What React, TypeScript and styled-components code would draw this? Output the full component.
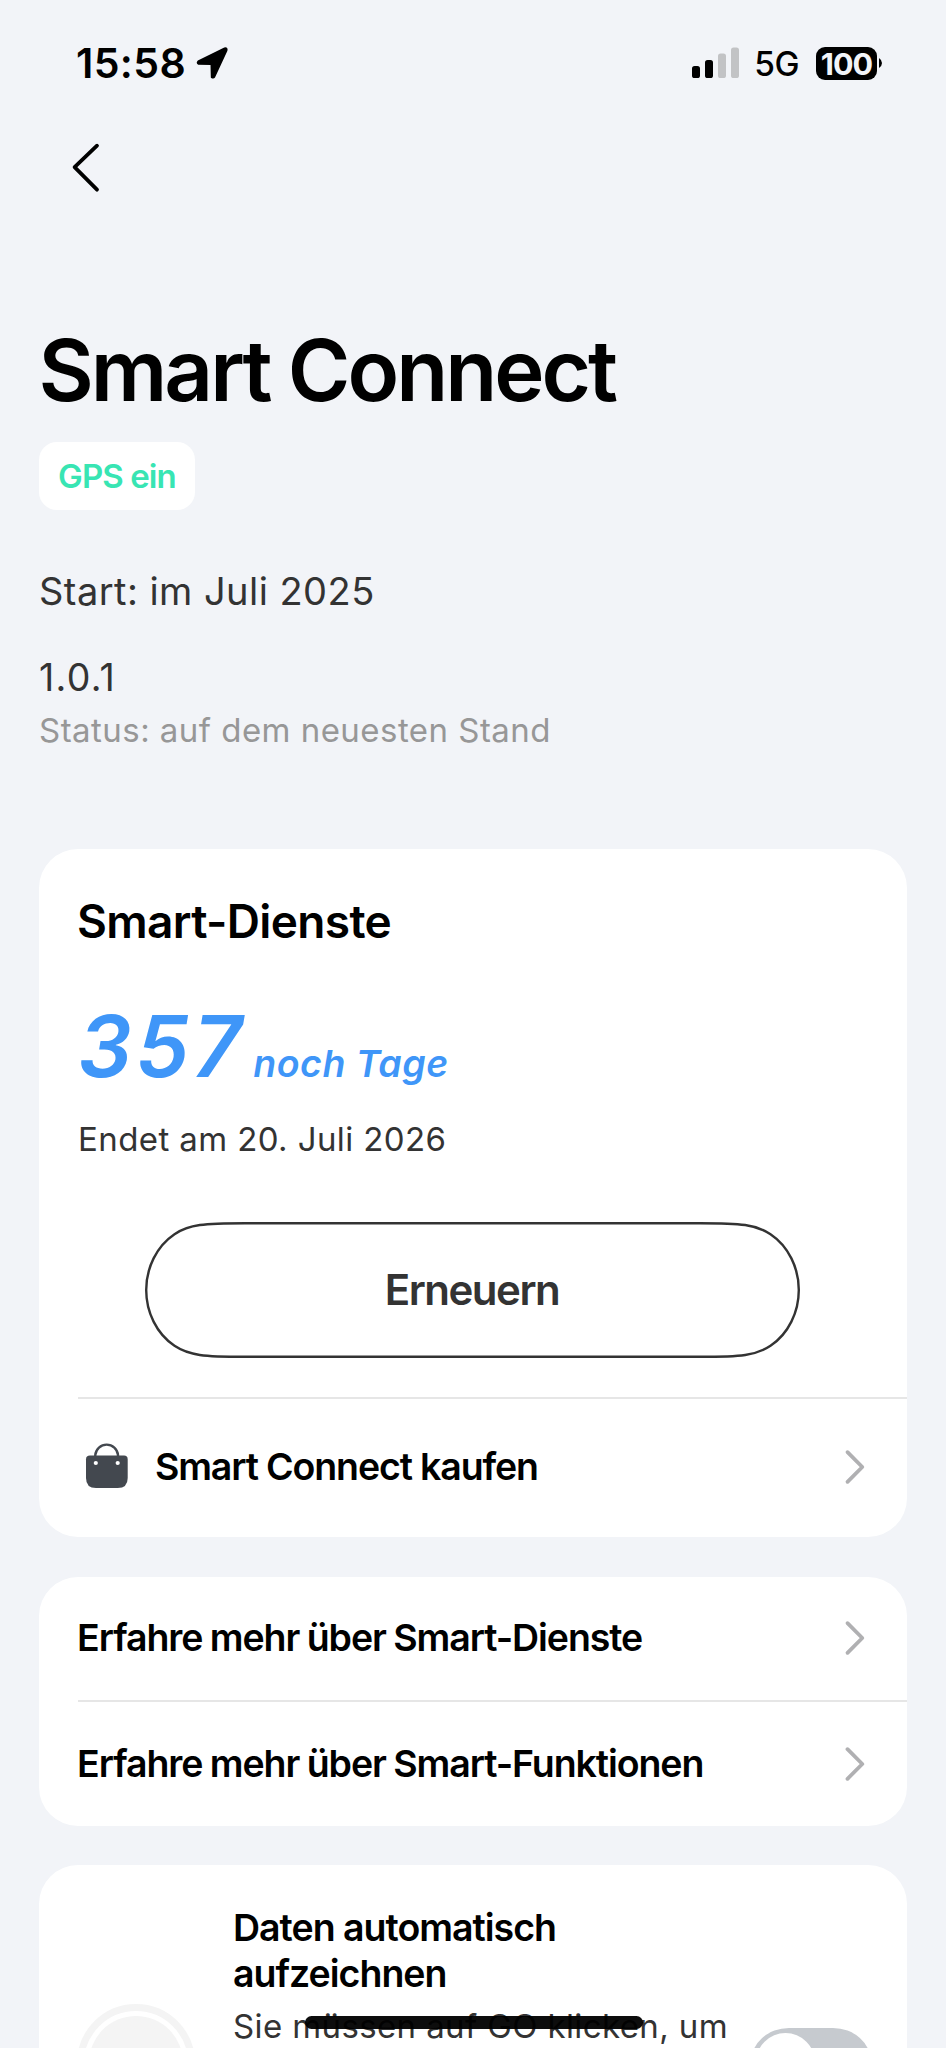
import React from "react";
import styled, { createGlobalStyle } from "styled-components";

const Global = createGlobalStyle`
  * { box-sizing: border-box; }
  html, body { margin: 0; padding: 0; background: #f2f4f8; }
  body { font-family: Inter, "Liberation Sans", sans-serif; color: #000; overflow: hidden; }
`;

const Screen = styled.div`
  position: relative;
  display: flex;
  flex-direction: column;
  width: 946px;
  height: 2048px;
  padding: 0 39px;
  overflow: hidden;
  background: #f2f4f8;
`;

const Text = styled.span<{ $size: number; $line: number; $weight?: number; $track?: number; $word?: number; $color?: string; $italic?: boolean }>`
  display: block;
  font-size: ${(p) => p.$size}px;
  line-height: ${(p) => p.$line}px;
  font-weight: ${(p) => p.$weight ?? 400};
  letter-spacing: ${(p) => p.$track ?? 0}px;
  word-spacing: ${(p) => p.$word ?? 0}px;
  color: ${(p) => p.$color ?? "#000"};
  font-style: ${(p) => (p.$italic ? "italic" : "normal")};
  white-space: nowrap;
`;

const StatusBar = styled.header`
  display: flex;
  align-items: center;
  justify-content: space-between;
  height: 126px;
  padding: 0 25px 0 37px;
  flex: none;
`;

const StatusGroup = styled.div`
  display: flex;
  align-items: center;
`;

const Arrow = styled.svg`
  margin-left: 10px;
`;

const Network = styled.div`
  margin: 2px 17px 0 15px;
`;

const Battery = styled.div`
  display: flex;
  align-items: center;
  justify-content: center;
  width: 61px;
  height: 33px;
  border-radius: 9px;
  background: #000;
`;

const BackButton = styled.button`
  display: block;
  width: 60px;
  height: 60px;
  margin: 12px 0 0 16px;
  padding: 0;
  border: 0;
  background: none;
  flex: none;
`;

const Hero = styled.section`
  display: flex;
  flex-direction: column;
  align-items: flex-start;
  height: 651px;
  padding-top: 123px;
  flex: none;
`;

const Title = styled.h1`
  margin: 0 0 0 -0.5px;
`;

const Badge = styled.div`
  display: flex;
  align-items: center;
  justify-content: center;
  width: 156px;
  height: 68px;
  margin: 21px 0 58px;
  border-radius: 18px;
  background: #fff;
`;

const Version = styled.div`
  display: flex;
  flex-direction: column;
  gap: 6px;
  margin-top: 41px;
`;

const Cards = styled.main`
  display: flex;
  flex-direction: column;
  gap: 39.5px;
`;

const Card = styled.section`
  display: flex;
  flex-direction: column;
  flex: none;
  border-radius: 39px;
  background: #fff;
  padding-left: 39px;
`;

const CardTitle = styled.h2`
  margin: 44px 0 0 -1px;
`;

const Remaining = styled.div`
  display: flex;
  align-items: baseline;
  gap: 8px;
  height: 104px;
  margin: 46px 0 20px;
`;

const RenewButton = styled.button`
  position: relative;
  width: 655px;
  height: 136px;
  margin: 63px 0 39px 67px;
  padding: 0 1px 0 0;
  border: 0;
  background: none;
  font-family: inherit;
`;

const Outline = styled.svg`
  position: absolute;
  inset: 0;
`;

const Row = styled.div<{ $height: number; $divided?: boolean; $lift?: number }>`
  display: flex;
  align-items: center;
  height: ${(p) => p.$height}px;
  padding: 0 41px ${(p) => p.$lift ?? 0}px 0;
  border-top: ${(p) => (p.$divided ? "2px solid #e6e6e6" : "0")};
  svg:last-child { margin-left: auto; }
`;

const RowLabel = styled.div`
  margin-left: -1px;
`;

const BagIcon = styled.svg`
  margin-right: 20px;
`;

const RecordRow = styled.div`
  display: flex;
  align-items: flex-start;
  height: 300px;
`;

const RecordIcon = styled.div`
  width: 118px;
  height: 118px;
  margin: 139px 0 0 -1px;
  border: 7px solid #f4f4f4;
  border-radius: 50%;
  padding: 5px;
  &::after {
    content: "";
    display: block;
    width: 94px;
    height: 94px;
    border-radius: 50%;
    background: #f4f4f4;
  }
`;

const RecordText = styled.div`
  width: 518px;
  margin: 40px 0 0 38px;
`;

const Toggle = styled.div`
  display: flex;
  width: 120px;
  height: 68px;
  margin-top: 163px;
  padding: 4.5px;
  border-radius: 38px / 34px;
  background: #c6cacf;
  &::after {
    content: "";
    width: 59px;
    height: 59px;
    border-radius: 50%;
    background: #fff;
  }
`;

const HomeIndicator = styled.div`
  position: absolute;
  left: 305px;
  top: 2016px;
  width: 338px;
  height: 13px;
  border-radius: 7px;
  background: rgba(0, 0, 0, 0.95);
`;

const Chevron = () => (
  <svg width="24" height="40" viewBox="0 0 24 40" fill="none">
    <path d="M5.5 5.2 L20.3 20 L5.5 34.8" stroke="#b0b0b2" strokeWidth="3.8" strokeLinecap="round" strokeLinejoin="round" />
  </svg>
);

export default function App() {
  return (
    <Screen>
      <Global />
      <StatusBar>
        <StatusGroup>
          <Text $size={41} $line={50} $weight={600} $track={0.35}>15:58</Text>
          <Arrow width="32" height="32" viewBox="0 0 32 32">
            <path d="M2.2 14.2 L28.6 1.3 Q31.4 0.6 30.6 3.6 L18.4 30 Q17.4 31.2 15.6 30.2 L15.3 17.3 L2.4 16.9 Q0.8 15.6 2.2 14.2 Z" stroke="#000" strokeWidth="1.6" strokeLinejoin="round" />
          </Arrow>
        </StatusGroup>
        <StatusGroup>
          <svg width="47" height="32" viewBox="0 0 47 32">
            <rect x="0" y="19" width="8" height="12" rx="2.6" />
            <rect x="13" y="13" width="8" height="18" rx="2.6" />
            <rect x="26" y="6.5" width="8" height="24.5" rx="2.6" fill="#c2c3c5" />
            <rect x="39" y="0.5" width="8" height="30.5" rx="2.6" fill="#c2c3c5" />
          </svg>
          <Network>
            <Text $size={33.5} $line={40} $weight={500} $track={-0.5}>5G</Text>
          </Network>
          <Battery>
            <Text $size={30.5} $line={33} $weight={700} $track={-1} $color="#f2f4f8">100</Text>
          </Battery>
          <svg width="5" height="12" viewBox="0 0 5 12">
            <path d="M2 1 Q5 3 5 6 Q5 9 2 11 Z" />
          </svg>
        </StatusGroup>
      </StatusBar>
      <BackButton aria-label="Zurück">
        <svg width="60" height="60" viewBox="0 0 60 60" fill="none">
          <path d="M42 7.7 L19.6 29.2 L42 51.7" stroke="#000" strokeWidth="3.8" strokeLinecap="round" strokeLinejoin="round" />
        </svg>
      </BackButton>
      <Hero>
        <Title>
          <Text $size={85} $line={100} $weight={600} $track={-3}>Smart Connect</Text>
        </Title>
        <Badge>
          <Text $size={33} $line={40} $weight={600} $track={-0.9} $color="#38e5b3">GPS ein</Text>
        </Badge>
        <Text $size={38} $line={46} $track={0.45} $color="#333">Start: im Juli 2025</Text>
        <Version>
          <Text $size={37.5} $line={46} $track={1.3} $color="#333">1.0.1</Text>
          <Text $size={33} $line={46} $track={0.46} $color="#979797">Status: auf dem neuesten Stand</Text>
        </Version>
      </Hero>
      <Cards>
        <Card>
          <CardTitle>
            <Text $size={46} $line={56} $weight={600} $track={-0.65}>Smart-Dienste</Text>
          </CardTitle>
          <Remaining>
            <Text $size={85} $line={104} $weight={600} $track={3.6} $italic $color="#3f96f8">357</Text>
            <Text $size={37.5} $line={46} $weight={600} $track={0.5} $italic $color="#3f96f8">noch Tage</Text>
          </Remaining>
          <Text $size={33} $line={40} $track={0.4} $color="#333">Endet am 20. Juli 2026</Text>
          <RenewButton>
            <Outline width="655" height="136" viewBox="0 0 655 136" fill="none">
              <path
                d="M100 1.2 C59 1.2 44 2.5 29.5 12.2 C11.5 24.2 1.2 46 1.2 68 C1.2 90 11.5 111.8 29.5 123.8 C44 133.5 59 134.8 100 134.8 H555 C596 134.8 611 133.5 625.5 123.8 C643.5 111.8 653.8 90 653.8 68 C653.8 46 643.5 24.2 625.5 12.2 C611 2.5 596 1.2 555 1.2 Z"
                stroke="#333"
                strokeWidth="2.4"
              />
            </Outline>
            <Text $size={42} $line={50} $weight={600} $track={-1.5} $color="#333">Erneuern</Text>
          </RenewButton>
          <Row $height={140} $divided $lift={3}>
            <BagIcon width="58" height="52" viewBox="0 0 58 52">
              <path d="M17.3 16 V14 A11.4 11.4 0 0 1 40 14 V16" fill="none" stroke="#43484f" strokeWidth="2.4" />
              <path d="M12 14.5 H46 Q49.7 14.5 49.7 18.2 V37 Q49.7 47 39.7 47 H18 Q8 47 8 37 V18.2 Q8 14.5 12 14.5 Z" fill="#43484f" />
              <circle cx="17.8" cy="22" r="2.1" fill="#fff" />
              <circle cx="39.7" cy="22" r="2.1" fill="#fff" />
            </BagIcon>
            <RowLabel>
              <Text $size={37.5} $line={46} $weight={600} $track={-1.14}>Smart Connect kaufen</Text>
            </RowLabel>
            <Chevron />
          </Row>
        </Card>
        <Card>
          <Row $height={123}>
            <RowLabel>
              <Text $size={37.5} $line={46} $weight={600} $track={-1.07} $word={-1}>Erfahre mehr über Smart-Dienste</Text>
            </RowLabel>
            <Chevron />
          </Row>
          <Row $height={126} $divided>
            <RowLabel>
              <Text $size={37.5} $line={46} $weight={600} $track={-1.07} $word={-1}>Erfahre mehr über Smart-Funktionen</Text>
            </RowLabel>
            <Chevron />
          </Row>
        </Card>
        <Card>
          <RecordRow>
            <RecordIcon />
            <RecordText>
              <Text $size={37.5} $line={46} $weight={600} $track={-1}>Daten automatisch<br />aufzeichnen</Text>
              <Text $size={33} $line={59} $track={0.38} $color="#333">Sie müssen auf GO klicken, um</Text>
            </RecordText>
            <Toggle />
          </RecordRow>
        </Card>
      </Cards>
      <HomeIndicator />
    </Screen>
  );
}
